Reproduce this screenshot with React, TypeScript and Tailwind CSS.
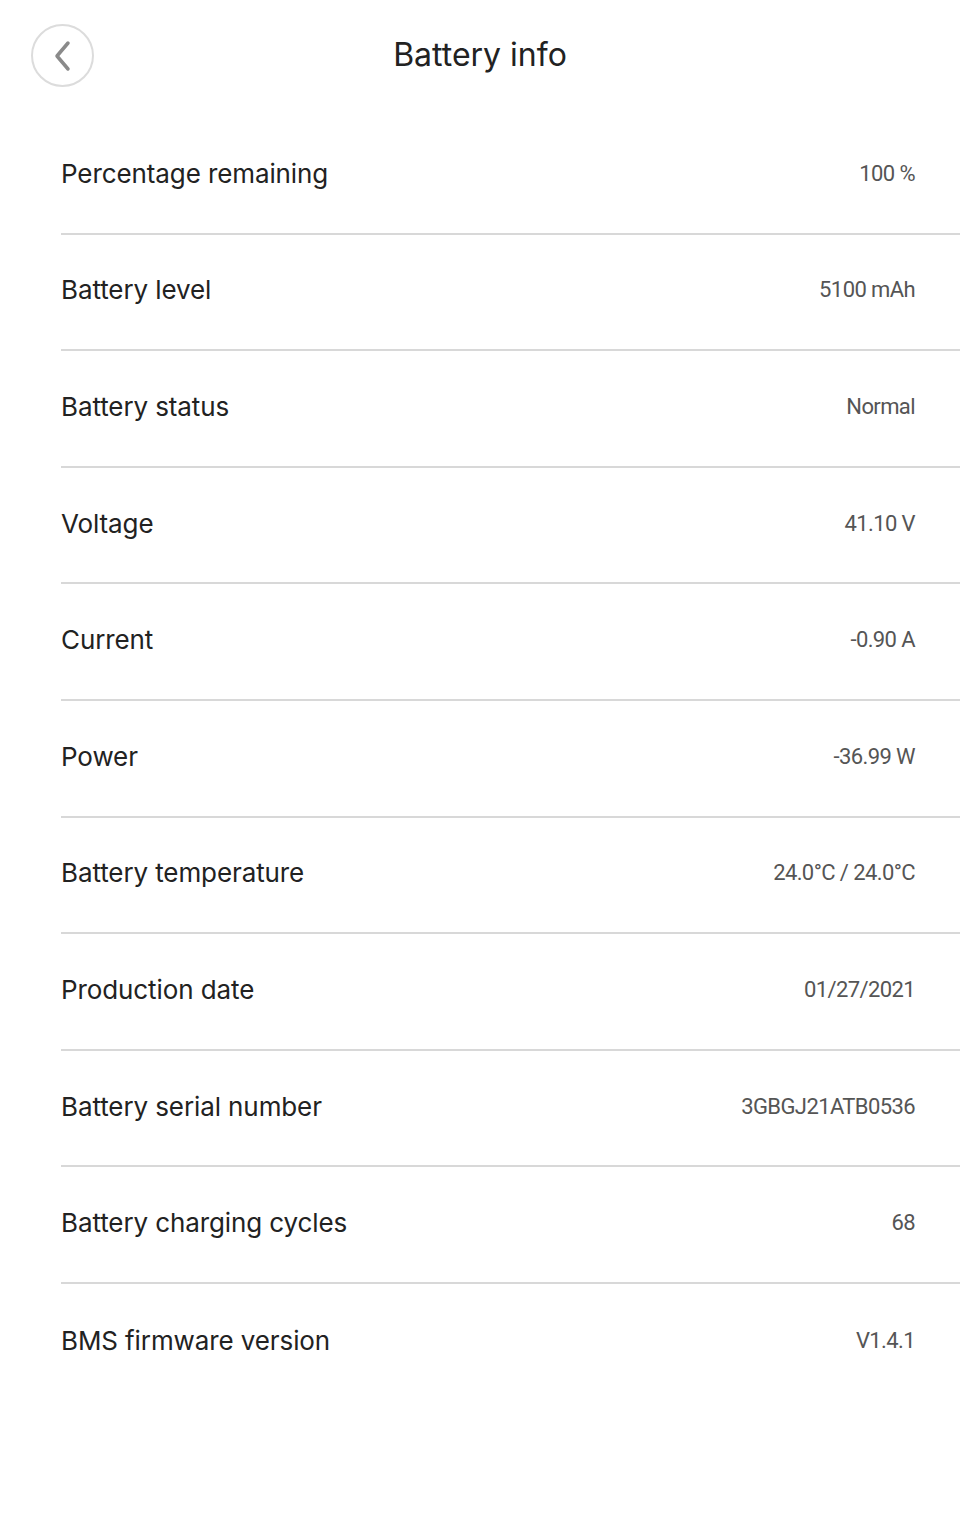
const rows: [string, string][] = [
  ["Percentage remaining", "100 %"],
  ["Battery level", "5100 mAh"],
  ["Battery status", "Normal"],
  ["Voltage", "41.10 V"],
  ["Current", "-0.90 A"],
  ["Power", "-36.99 W"],
  ["Battery temperature", "24.0°C / 24.0°C"],
  ["Production date", "01/27/2021"],
  ["Battery serial number", "3GBGJ21ATB0536"],
  ["Battery charging cycles", "68"],
  ["BMS firmware version", "V1.4.1"],
];

export default function App() {
  return (
    <div className="w-[960px] h-[1531px] bg-white font-['Inter',sans-serif]">
      {/* Header */}
      <div className="relative h-[118px] flex items-start justify-center">
        <button className="absolute left-[31px] top-[24px] w-[63px] h-[63px] rounded-full border-2 border-[#dcdcdc] flex items-center justify-center">
          <svg width="22" height="34" viewBox="0 0 22 34" fill="none">
            <path d="M16 4 L5 17 L16 30" stroke="#8a8a8a" strokeWidth="3.5" strokeLinecap="round" strokeLinejoin="round" />
          </svg>
        </button>
        <h1 className="mt-[35px] text-[32px] leading-[40px] text-[#222] font-normal">Battery info</h1>
      </div>

      {/* Rows */}
      <div className="pl-[61px]">
        {rows.map(([label, value], i) => (
          <div
            key={label}
            className={`h-[116.6px] pb-[4px] flex items-center justify-between pr-[45px] ${
              i < rows.length - 1 ? "border-b-2 border-[#d8d8d8]" : ""
            }`}
          >
            <span className="text-[26px] text-[#222] tracking-[-0.1px]">{label}</span>
            <span className="text-[22px] text-[#555] font-['Roboto',sans-serif] tracking-[-0.6px]">{value}</span>
          </div>
        ))}
      </div>
    </div>
  );
}
